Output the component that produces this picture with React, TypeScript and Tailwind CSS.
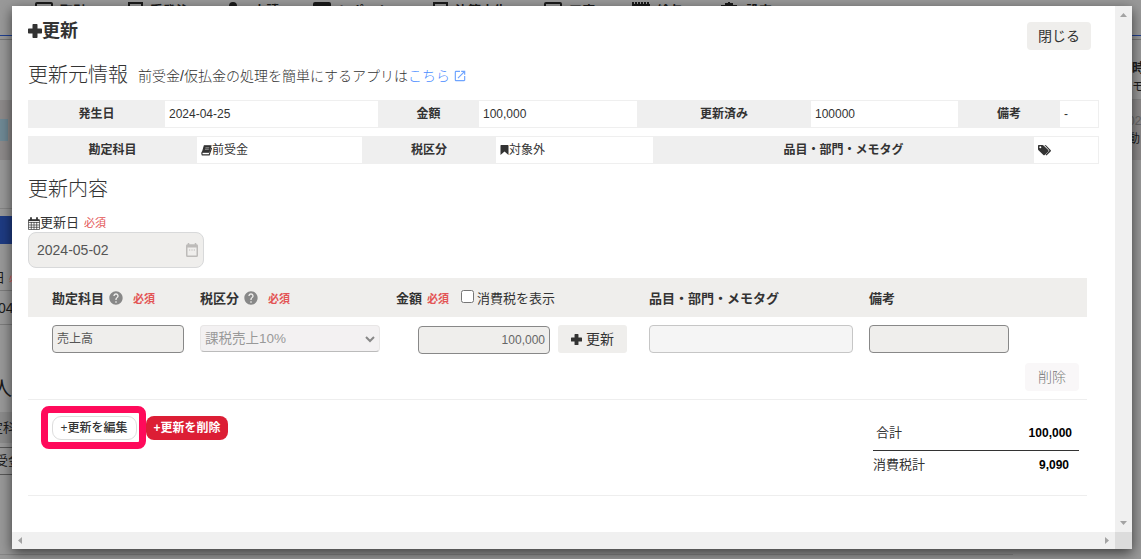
import type { ReactNode } from 'react';
import { MdHelp, MdOpenInNew } from 'react-icons/md';

const PlusIcon = ({ className }: { className?: string }) => (
    <svg viewBox="0 0 14 14" className={className} fill="currentColor">
        <path d="M5.2 0h3.6q.7 0 .7.7v3.8h3.8q.7 0 .7.7v3.6q0 .7-.7.7H9.500v3.800q0 .7-.7.7H5.200q-.7 0-.7-.7V9.500H.7q-.7 0-.7-.7V5.200q0-.7.7-.7h3.800V.7q0-.7.700-.7z" />
    </svg>
);

const BookIcon = () => (
    <svg viewBox="0 0 12 12" className="h-[11px] w-[11px] shrink-0" fill="none" stroke="currentColor">
        <path d="M3.600.8h7.300L8.700 7.800H1.600z" fill="currentColor" strokeWidth="1.200" />
        <path d="M1.500 7.500Q.5 9 1.400 10.800H8.900L11.600 3" strokeWidth="1.300" />
        <path d="M4.800 3h4.200M4.300 4.700h4.200" stroke="#fff" strokeWidth=".5" />
    </svg>
);

const BookmarkIcon = () => (
    <svg viewBox="0 0 8 10" className="h-[10px] w-[9px] shrink-0" fill="currentColor">
        <path d="M.6 0h6.800q.6 0 .6.6V10L4 6.600 0 10V.6Q0 0 .6 0z" />
    </svg>
);

const TagsIcon = () => (
    <svg viewBox="0 0 13 11" className="h-[11px] w-[13px]" fill="currentColor">
        <path fillRule="evenodd" d="M.8 0H4.500q.6 0 1 .4l4.800 4.700q.6.7 0 1.300L6.700 10q-.7.600-1.300 0L.5 5.200Q0 4.700 0 4V.8Q0 0 .8 0zM2.300 1.300a1 1 0 1 0 0 2 1 1 0 0 0 0-2z" />
        <path d="M6.400 0h.8q.5 0 1 .4l4.400 4.700q.7.700 0 1.300L9 10q-.7.700-1.200.1l-.3-.3 3.500-3.700q.6-.6 0-1.200z" />
    </svg>
);

const CalendarIcon = () => (
    <svg viewBox="0 0 12 13" className="h-[13px] w-[12px] shrink-0" fill="none" stroke="currentColor">
        <path d="M.5 3h11v9.500H.5zM.5 5.500h11M.5 8h11M.5 10.300h11M3.300 5v7.500M6 5v7.500M8.700 5v7.500" strokeWidth=".7" />
        <path d="M.5 3.200h11" strokeWidth="1.800" />
        <path d="M3 .3v3M9 .3v3" strokeWidth="1.800" />
    </svg>
);

const DatePickerIcon = () => (
    <svg viewBox="0 0 12 14" className="h-[14px] w-[12px]" fill="none" stroke="#bdbbb9">
        <rect x=".75" y="2.250" width="10.500" height="11" rx=".8" strokeWidth="1.500" />
        <path d="M.5 3h11" strokeWidth="3" />
        <path d="M2.500 0v2M9.500 0v2" strokeWidth="1.500" />
        <path d="M3 7h1.200M5.400 7h1.200M7.800 7H9" strokeWidth="1.200" />
    </svg>
);

const Required = ({ className = '' }: { className?: string }) => (
    <span className={`text-[11px] text-[#e35555] ${className}`}>必須</span>
);

const Label = ({ children }: { children: ReactNode }) => (
    <div className="flex items-center justify-center bg-[#efefef] font-bold">{children}</div>
);

const Value = ({ children }: { children: ReactNode }) => (
    <div className="my-px flex items-center bg-white pl-1">{children}</div>
);

const navItems = [
    { label: '取引', width: 'w-[90px]' },
    { label: '受発注', width: 'w-[103px]' },
    { label: '申請', width: 'w-[85px]' },
    { label: 'レポート', width: 'w-[117px]' },
    { label: '決算申告', width: 'w-[114px]' },
    { label: '口座', width: 'w-[88px]' },
    { label: '給与', width: 'w-[89px]' },
    { label: '設定', width: 'w-[90px]' },
];

const NavIcon = ({ index }: { index: number }) => (
    <svg viewBox="0 0 18 16" className="h-4 w-[18px] shrink-0" fill="none" stroke="currentColor" strokeWidth="2">
        {(index === 0 || index === 5) && <rect x="1" y="1" width="16" height="12" rx="1" />}
        {(index === 1 || index === 4) && <path d="M4 13V1h13v12zM1 4v11" />}
        {index === 2 && <circle cx="5" cy="4" r="3" fill="currentColor" />}
        {index === 3 && <rect x="1" y="1" width="16" height="12" rx="1" fill="currentColor" />}
        {index === 6 && <path d="M1 0v14M4 0v14M7 0v14M10 0v14M13 0v14M16 0v14M1 3h16v10H1z" fill="currentColor" />}
        {index === 7 && <path d="M8 0v4M1 4h14v8H1zM4 2h8" fill="currentColor" />}
    </svg>
);

// Page that stays dimmed behind the dialog
const Backdrop = () => (
    <div className="flex h-full flex-col bg-[#999] text-[#1b1b1b]">
        <div className="flex h-9 border-b border-[#1f3f90] pl-[35px] pt-0.5 text-[13px] font-bold">
            {navItems.map((item, i) => (
                <div key={item.label} className={`flex h-5 shrink-0 items-start gap-[7px] whitespace-nowrap ${item.width}`}>
                    <NavIcon index={i} />
                    <span className="pt-px leading-4">{item.label}</span>
                </div>
            ))}
        </div>
        <div className="mt-[3px] flex h-[515px] shrink-0 justify-between border-t border-[#777] text-[13px]">
            <div className="flex w-4 flex-col">
                <div className="mt-[60px] flex h-[60px] shrink-0 items-center bg-[#8d8a8a]">
                    <div className="h-[22px] w-2 bg-[#6f8995]" />
                </div>
                <div className="mt-12 h-2 shrink-0 border-t border-[#858585]" />
                <div className="h-7 shrink-0 bg-[#1e3b83]" />
                <div className="flex h-[46px] shrink-0 items-end pb-1">
                    <span className="-ml-2">日</span>
                    <Required className="ml-1 whitespace-nowrap" />
                </div>
                <div className="flex h-[35px] shrink-0 items-center border-y border-[#7c7c7c] pt-px text-sm">
                    <span className="-ml-0.5">04</span>
                </div>
                <div className="mt-[51px] h-9 shrink-0 text-[20px]">
                    <span className="-ml-2 whitespace-nowrap">人</span>
                </div>
                <div className="flex h-[31px] shrink-0 items-center bg-[#8b8b8b]">
                    <span className="-ml-[10px] whitespace-nowrap">定科</span>
                </div>
                <div className="mt-1 flex h-7 shrink-0 items-center border-y border-[#575757]">
                    <span className="-ml-[5px] whitespace-nowrap">受金</span>
                </div>
            </div>
            <div className="w-[9px] whitespace-nowrap">
                <div className="mt-[18px] text-[13px] font-bold leading-5">時</div>
                <div className="h-[22px] border-b border-[#858585] text-xs leading-[18px]">モス</div>
                <div className="h-[60px] bg-[#8d8a8a] pt-3">
                    <div className="-ml-1 text-xs leading-[18px] text-[#666]">02</div>
                    <div className="-ml-1 text-xs leading-[18px]">動</div>
                </div>
            </div>
        </div>
        <div className="w-[1013px] border-t border-[#858585]" />
    </div>
);

const columns = 'grid grid-cols-[148px_196px_253px_220px_218px] pl-6';

const App = () => {
    return (
        <div className="relative h-[559px] w-[1141px] overflow-hidden bg-[#999] font-['Liberation_Sans','Noto_Sans_CJK_JP',sans-serif] text-xs text-[#333]">
            <Backdrop />
            <div className="absolute left-3 top-1.5 grid h-[543px] w-[1120px] grid-cols-[1fr_17px] grid-rows-[1fr_17px] bg-white shadow-[0_4px_12px_rgba(0,0,0,0.6)]">
                <div className="overflow-hidden pl-4">
                    <header className="flex h-[49px] justify-between pr-6 pt-4">
                        <h1 className="flex h-[18px] items-center text-[18px] font-bold">
                            <PlusIcon className="size-[14px]" />
                            更新
                        </h1>
                        <button className="h-7 w-16 rounded-[4px] bg-[#efeeec] text-sm">閉じる</button>
                    </header>

                    <div className="flex h-[45px] items-center pb-1">
                        <h2 className="text-[20px] font-light">更新元情報</h2>
                        <p className="ml-2.5 text-sm font-light">前受金/仮払金の処理を簡単にするアプリは</p>
                        <a href="#" className="flex items-center text-sm font-light text-[#4a8cff]">
                            こちら
                            <MdOpenInNew className="ml-[3px] size-[14px] text-[#6ea4ff]" />
                        </a>
                    </div>

                    <div className="grid h-7 w-[1071px] grid-cols-[137px_213px_101px_158px_174px_147px_102px_38px] border-r border-[#efefef] bg-[#efefef]">
                        <Label>発生日</Label>
                        <Value>2024-04-25</Value>
                        <Label>金額</Label>
                        <Value>100,000</Value>
                        <Label>更新済み</Label>
                        <Value>100000</Value>
                        <Label>備考</Label>
                        <Value>-</Value>
                    </div>
                    <div className="mt-2 grid h-7 w-[1071px] grid-cols-[169px_165px_134px_157px_381px_64px] border-r border-[#efefef] bg-[#efefef]">
                        <Label>勘定科目</Label>
                        <Value><BookIcon />前受金</Value>
                        <Label>税区分</Label>
                        <Value><BookmarkIcon />対象外</Value>
                        <Label>品目・部門・メモタグ</Label>
                        <Value><TagsIcon /></Value>
                    </div>

                    <h2 className="mt-[9px] h-8 text-[20px] font-light leading-8">更新内容</h2>
                    <div className="mt-[9px] flex h-[18px] items-center">
                        <CalendarIcon />
                        <span className="text-[13px]">更新日</span>
                        <Required className="ml-[5px]" />
                    </div>
                    <div className="flex h-9 w-44 items-center justify-between rounded-[8px] border border-[#d8d9da] bg-[#efeeec] pl-2 pr-[5px] text-sm text-[#555]">
                        2024-05-02
                        <DatePickerIcon />
                    </div>

                    <section className="mt-2.5 w-[1059px]">
                        <div className={`${columns} h-[39px] items-center bg-[#efeeec] pt-0.5 text-[13px] font-bold`}>
                            <div className="flex items-center">
                                勘定科目
                                <MdHelp className="ml-1 size-4 text-[#888]" />
                                <Required className="ml-[9px] pt-px" />
                            </div>
                            <div className="flex items-center">
                                税区分
                                <MdHelp className="ml-1 size-4 text-[#888]" />
                                <Required className="ml-[9px] pt-px" />
                            </div>
                            <div className="flex items-center">
                                金額
                                <Required className="ml-[5px] pt-px" />
                                <span className="mb-1 ml-3 size-[13px] rounded-[2.5px] border border-[#767676] bg-white" />
                                <span className="ml-[3px] font-normal">消費税を表示</span>
                            </div>
                            <div>品目・部門・メモタグ</div>
                            <div>備考</div>
                        </div>

                        <div className={`${columns} pt-2`}>
                            <div className="h-7 w-[132px] rounded-[4px] border border-[#888] bg-[#efeeec] pl-1 leading-[26px] text-[#555]">売上高</div>
                            <div className="flex h-[27px] w-[180px] items-center justify-between rounded-[4px] border border-[#e8e6e6] border-b-[#bbb] bg-[#f3f1f2] pl-1 pr-1 pt-px text-[13.500px] text-[#999]">
                                課税売上10%
                                <svg viewBox="0 0 10 7" className="h-[7px] w-[10px]" fill="none" stroke="#888" strokeWidth="2">
                                    <path d="m1 1 4 4 4-4" />
                                </svg>
                            </div>
                            <div className="flex pl-[22px]">
                                <div className="mt-px h-7 w-[132px] rounded-[4px] border border-[#888] bg-[#efeeec] pr-1 text-right leading-[26px] text-[#666]">100,000</div>
                                <button className="ml-2 flex h-7 w-[69px] items-center justify-center rounded-[3px] bg-[#efeeec] text-sm">
                                    <PlusIcon className="mr-1 size-[11px]" />
                                    更新
                                </button>
                            </div>
                            <div className="h-7 w-[204px] rounded-[4px] border border-[#c6c6c6] bg-[#f5f5f5]" />
                            <div className="h-7 w-[140px] rounded-[4px] border border-[#888] bg-[#efeeec]" />
                        </div>
                        <div className="flex h-[46px] justify-end border-b border-[#eee] pr-2 pt-[9px]">
                            <button className="h-7 w-[54px] rounded-[4px] bg-[#f9f7f8] text-sm font-light text-[#777]">削除</button>
                        </div>
                    </section>

                    <section className="flex h-24 w-[1059px] justify-between border-b border-[#eee] pr-2">
                        <div className="flex pl-[13px] pt-1.5">
                            <div className="flex h-[43px] w-[105px] items-center justify-center rounded-[8px] border-[7px] border-[#ff0a5b] pl-px">
                                <button className="h-6 w-[85px] rounded-[9px] border border-[#ddd] bg-white font-medium">+更新を編集</button>
                            </div>
                            <button className="mt-2.5 h-6 w-[82px] rounded-[8px] bg-[#dc1e35] font-bold text-white">+更新を削除</button>
                        </div>
                        <div className="w-[206px] pt-4 text-[13px]">
                            <div className="flex h-[35px] items-center justify-between border-b border-[#333] pl-[3px] pr-[7px]">
                                合計
                                <b className="text-xs text-black">100,000</b>
                            </div>
                            <div className="flex h-[27px] items-center justify-between pr-2.5">
                                消費税計
                                <b className="text-xs text-black">9,090</b>
                            </div>
                        </div>
                    </section>
                </div>

                <div className="flex flex-col items-center justify-between bg-[#f0f0f0] py-[7px]">
                    <svg viewBox="0 0 7 4" className="h-1 w-[7px]" fill="#a3a3a3"><path d="M0 4h7L3.500 0z" /></svg>
                    <svg viewBox="0 0 7 4" className="h-1 w-[7px]" fill="#a3a3a3"><path d="M0 0h7L3.500 4z" /></svg>
                </div>
                <div className="flex items-center justify-between bg-[#f0f0f0] px-1.5">
                    <svg viewBox="0 0 4 7" className="h-[7px] w-1" fill="#a3a3a3"><path d="M4 0v7L0 3.500z" /></svg>
                    <svg viewBox="0 0 4 7" className="h-[7px] w-1" fill="#a3a3a3"><path d="M0 0v7l4-3.500z" /></svg>
                </div>
                <div className="bg-[#dcdcdc]" />
            </div>
        </div>
    );
};

export default App;
